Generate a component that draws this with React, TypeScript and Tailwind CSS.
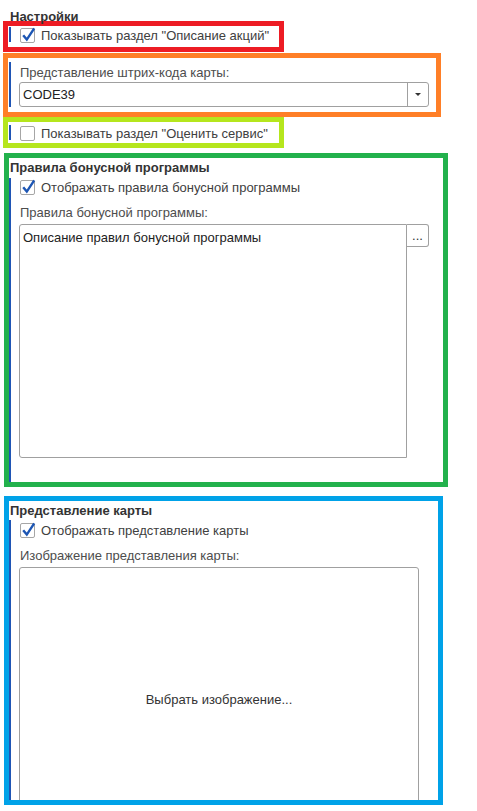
import React from "react"

function Check({ checked }: { checked?: boolean }) {
  return (
    <span className="relative block h-[15px] w-[15px] shrink-0 rounded-[2px] border border-[#a6a6a6] bg-white">
      {checked && (
        <svg
          viewBox="0 0 15 15"
          className="absolute -left-px -top-px h-[15px] w-[15px] overflow-visible"
        >
          <path d="M3.2 7.2 L6.8 11.6 L14.2 0.4" fill="none" stroke="#1d56b4" strokeWidth="2.4" />
        </svg>
      )}
    </span>
  )
}

function Bar({ className = "" }: { className?: string }) {
  return <div className={"w-[2px] shrink-0 bg-[#1f55b5] " + className} />
}

export default function App() {
  return (
    <div
      className="h-[811px] w-[477px] overflow-hidden bg-white pt-[9px] text-[13px] leading-[15px] text-[#404040]"
      style={{ fontFamily: '"Liberation Sans", Arial, sans-serif' }}
    >
      {/* Настройки */}
      <div className="ml-[10px] h-[12px] font-bold text-[#333]">Настройки</div>

      {/* red */}
      <div className="ml-[3px] h-[31px] w-[281px] border-[5px] border-[#ed1c24]">
        <div className="flex pt-[1px]">
          <Bar className="ml-px h-[15px]" />
          <div className="ml-[9px] mt-px">
            <Check checked />
          </div>
          <span className="ml-[6px] mt-px whitespace-nowrap">Показывать раздел "Описание акций"</span>
        </div>
      </div>

      {/* orange */}
      <div className="ml-[3px] mt-px h-[64px] w-[438px] border-[5px] border-[#ff7f27]">
        <div className="flex pt-[4px]">
          <Bar className="ml-px self-stretch" />
          <div className="ml-[8px] flex flex-col">
            <span className="ml-px mt-[3px] text-[#4d4d4d]">Представление штрих-кода карты:</span>
            <div className="mt-[2px] flex h-[25px] w-[410px] rounded-[3px] border border-[#a0a0a0]">
              <div className="flex flex-1 items-center pl-[3px] text-[#222]">CODE39</div>
              <div className="flex w-[21px] items-center justify-center border-l border-[#a0a0a0]">
                <div className="h-0 w-0 border-x-[3px] border-t-[3px] border-x-transparent border-t-[#333]" />
              </div>
            </div>
          </div>
        </div>
      </div>

      {/* lime */}
      <div className="ml-[3px] h-[31px] w-[281px] border-[5px] border-[#b5e61d]">
        <div className="flex pt-[3px]">
          <Bar className="ml-px h-[15px]" />
          <div className="ml-[9px] mt-px">
            <Check />
          </div>
          <span className="ml-[6px] mt-px whitespace-nowrap">Показывать раздел "Оценить сервис"</span>
        </div>
      </div>

      {/* green */}
      <div className="ml-[4px] mt-[5px] flex h-[334px] w-[444px] flex-col border-[5px] border-[#22b14c]">
        <div className="ml-px mt-[2px] font-bold text-[#333]">Правила бонусной программы</div>
        <div className="mt-[3px] flex flex-1">
          <Bar className="self-stretch" />
          <div className="ml-[8px] flex flex-col">
            <div className="ml-px mt-[2px] flex">
              <Check checked />
              <span className="ml-[6px]">Отображать правила бонусной программы</span>
            </div>
            <span className="ml-px mt-[10px] text-[#4d4d4d]">Правила бонусной программы:</span>
            <div className="mt-[4px] flex">
              <div className="h-[234px] w-[388px] rounded-l-[3px] border border-[#a0a0a0] px-[3px] pt-[5px] text-[#222]">
                Описание правил бонусной программы
              </div>
              <div className="flex h-[23px] w-[22px] items-center justify-center rounded-r-[3px] border border-l-0 border-[#a0a0a0] text-[#333]">
                ...
              </div>
            </div>
          </div>
        </div>
      </div>

      {/* cyan */}
      <div className="ml-[4px] mt-[9px] flex h-[309px] w-[439px] flex-col overflow-hidden border-[5px] border-[#00a2e8]">
        <div className="ml-px mt-[2px] font-bold text-[#333]">Представление карты</div>
        <div className="mt-[2px] flex flex-1">
          <Bar className="self-stretch" />
          <div className="ml-[8px] flex flex-col">
            <div className="ml-px mt-[3px] flex">
              <Check checked />
              <span className="ml-[6px]">Отображать представление карты</span>
            </div>
            <span className="ml-px mt-[10px] text-[#4d4d4d]">Изображение представления карты:</span>
            <div className="mt-[4px] flex h-[264px] w-[400px] shrink-0 items-center justify-center rounded-[3px] border border-[#a0a0a0] text-[#333]">
              Выбрать изображение...
            </div>
          </div>
        </div>
      </div>
    </div>
  )
}
